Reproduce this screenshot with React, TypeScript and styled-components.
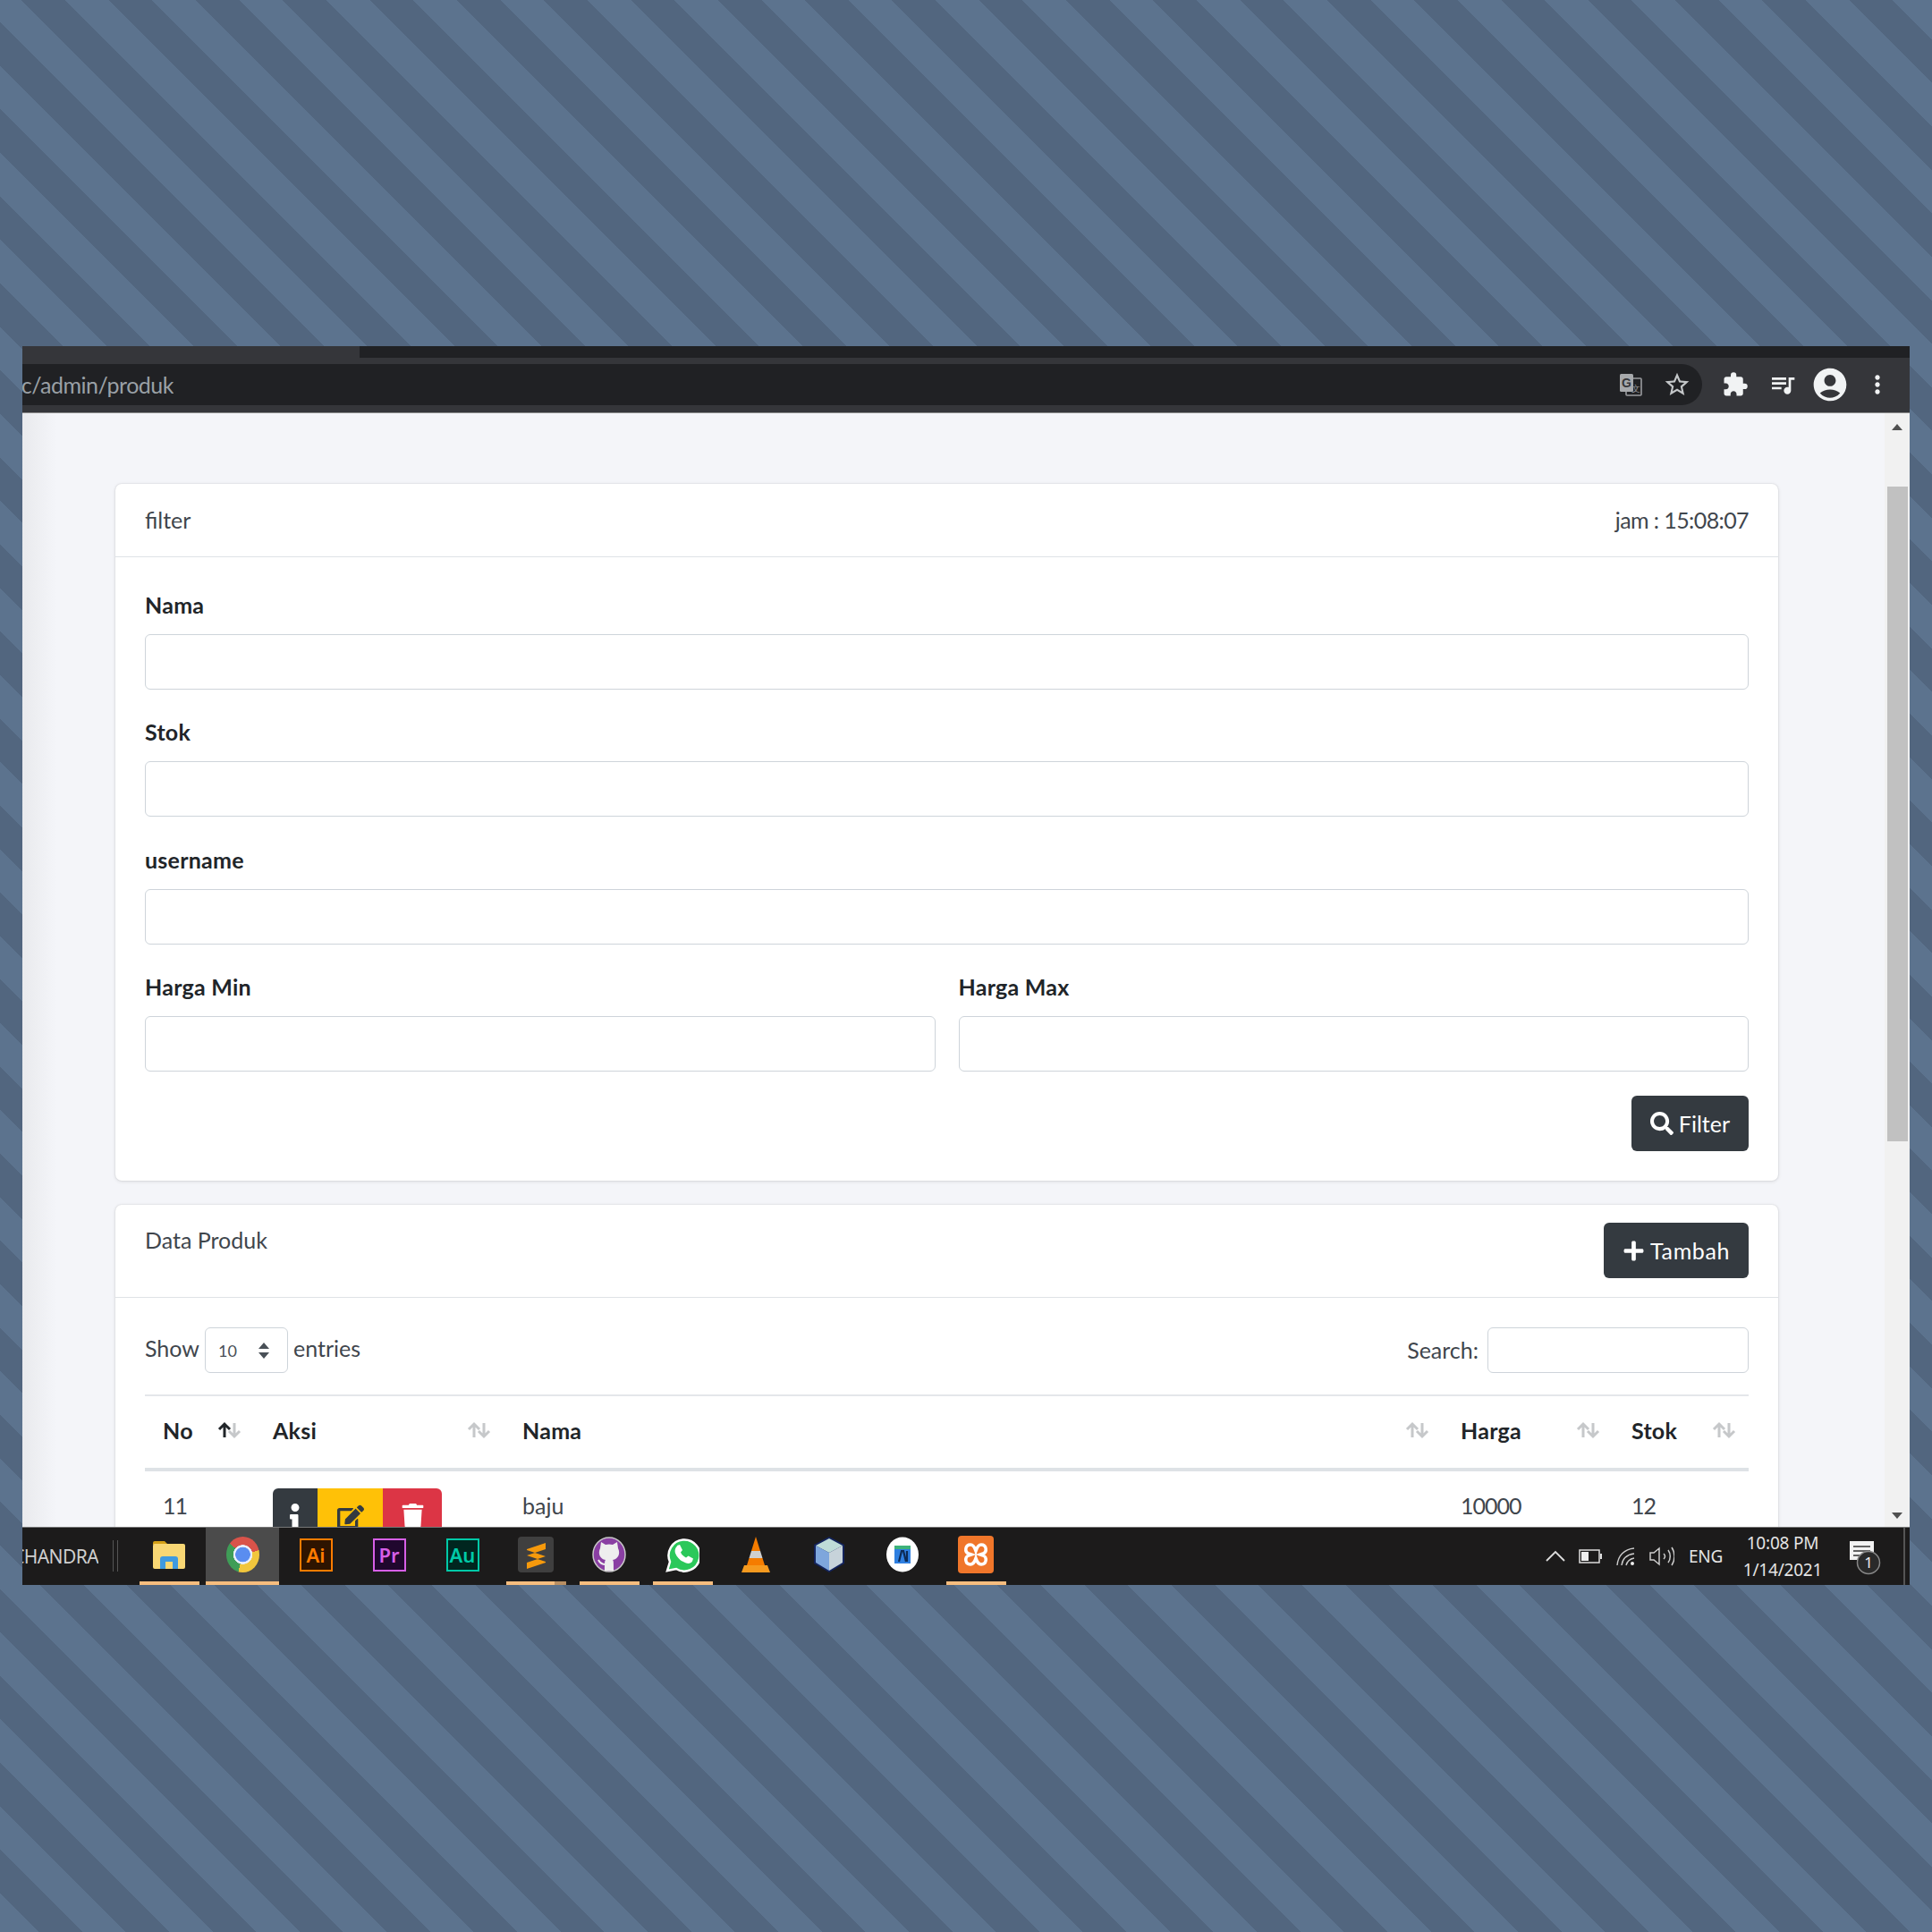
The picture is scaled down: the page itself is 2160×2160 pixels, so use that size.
import styled, { createGlobalStyle } from "styled-components";
import { FaSearch, FaPlus, FaInfo, FaEdit, FaTrash } from "react-icons/fa";
import { MdStarBorder, MdExtension, MdQueueMusic, MdAccountCircle, MdMoreVert } from "react-icons/md";

const Global = createGlobalStyle`
  html, body { margin: 0; padding: 0; }
  * { box-sizing: border-box; }
  body { font-family: "Lato", "Liberation Sans", sans-serif; }
`;

const Page = styled.div`
  width: 2160px;
  height: 2160px;
  padding: 387px 25px 0;
  background: repeating-linear-gradient(
    45deg,
    #5c738e 0 30.7px,
    #52667f 30.7px 65.1px,
    #5c738e 65.1px 68.8px
  );
`;

const Window = styled.div`
  height: 1385px;
  display: flex;
  flex-direction: column;
  overflow: hidden;
`;

const TabStrip = styled.div`
  height: 13px;
  flex: none;
  background: #202124;
  display: flex;
`;

const ActiveTab = styled.div`
  width: 377px;
  background: #35363a;
`;

const Toolbar = styled.div`
  height: 62px;
  flex: none;
  padding-top: 7px;
  background: #35363a;
  border-bottom: 1px solid #8b8b8b;
  display: flex;
  align-items: flex-start;
`;

const Omnibox = styled.div`
  width: 1878px;
  height: 46px;
  background: #202124;
  border-radius: 0 23px 23px 0;
  display: flex;
  align-items: center;
  justify-content: space-between;
  padding-right: 12px;
`;

const UrlClip = styled.div`
  width: 169px;
  overflow: hidden;
  display: flex;
  justify-content: flex-end;
`;

const Url = styled.span`
  font-size: 25px;
  letter-spacing: -0.5px;
  color: #9aa0a6;
  white-space: nowrap;
`;

const OmniIcons = styled.div`
  display: flex;
  align-items: center;
  gap: 23px;
`;

const ToolIcons = styled.div`
  display: flex;
  align-items: center;
  height: 46px;
  padding-left: 6px;
  color: #f1f3f4;
`;

const ToolSlot = styled.div<{ $w: number }>`
  width: ${(p) => p.$w}px;
  display: flex;
  justify-content: center;
  align-items: center;
`;

const Viewport = styled.div`
  flex: 1;
  min-height: 0;
  display: flex;
`;

const Main = styled.main`
  flex: 1;
  min-width: 0;
  overflow: hidden;
  padding: 79px 119px 0 104px;
  background: linear-gradient(90deg, #e9eaed, #f4f5f9 38px);
`;

const Scrollbar = styled.div`
  width: 28px;
  background: #f1f1f1;
  display: flex;
  flex-direction: column;
  align-items: center;
  justify-content: space-between;
  padding: 12px 0 9px;
  position: relative;
`;

const ScrollThumb = styled.div`
  position: absolute;
  top: 82px;
  left: 3px;
  width: 23px;
  height: 732px;
  background: #c1c1c1;
`;

const ScrollArrow = styled.div<{ $down?: boolean }>`
  width: 0;
  height: 0;
  border-left: 6px solid transparent;
  border-right: 6px solid transparent;
  ${(p) => (p.$down ? "border-top: 7px solid #505050;" : "border-bottom: 7px solid #505050;")}
`;

const Card = styled.section`
  background: #fff;
  border-radius: 7px;
  box-shadow: 0 0 2px rgba(0, 0, 0, 0.14), 0 1px 4px rgba(0, 0, 0, 0.1);
  margin-bottom: 27px;
`;

const CardHeader = styled.header<{ $tall?: boolean }>`
  display: flex;
  justify-content: space-between;
  align-items: ${(p) => (p.$tall ? "flex-start" : "center")};
  height: ${(p) => (p.$tall ? 104 : 82)}px;
  padding: ${(p) => (p.$tall ? "20px" : "0")} 33px 0;
  border-bottom: 1px solid #dfe2e6;
  font-size: 25px;
  line-height: 39px;
  color: #3f464d;
`;

const Clock = styled.span`
  letter-spacing: -0.6px;
`;

const CardBody = styled.div<{ $first?: boolean }>`
  padding: ${(p) => (p.$first ? 34 : 33)}px 33px 33px;
`;

const Field = styled.div`
  margin-bottom: 28.3px;
`;

const Label = styled.label`
  display: block;
  font-size: 25px;
  font-weight: 700;
  letter-spacing: 0.25px;
  line-height: 38px;
  margin-bottom: 14px;
  color: #212529;
`;

const Input = styled.input`
  display: block;
  width: 100%;
  height: 62px;
  border: 1.5px solid #ced4da;
  border-radius: 6px;
  background: #fff;
`;

const TwoCols = styled.div`
  display: grid;
  grid-template-columns: 1fr 1fr;
  gap: 26px;
  margin-bottom: -1.2px;
`;

const Actions = styled.div`
  display: flex;
  justify-content: flex-end;
`;

const DarkButton = styled.button`
  height: 62px;
  padding: 0 21px;
  display: inline-flex;
  align-items: center;
  gap: 6px;
  border: 0;
  border-radius: 6px;
  background: #343a40;
  color: #fff;
  font: 25px "Lato", sans-serif;
`;

const WideLabel = styled.span`
  letter-spacing: 0.6px;
`;

const TableTools = styled.div`
  display: flex;
  justify-content: space-between;
  align-items: center;
  height: 51px;
  margin-bottom: 24px;
  font-size: 25px;
  color: #3f464d;
`;

const ToolGroup = styled.div`
  display: flex;
  align-items: center;
  gap: 6px;
`;

const ToolText = styled.span<{ $lift: number }>`
  margin-bottom: ${(p) => p.$lift}px;
`;

const EntriesSelect = styled.div`
  width: 93px;
  height: 51px;
  border: 1.5px solid #ced4da;
  border-radius: 6px;
  display: flex;
  align-items: center;
  justify-content: space-between;
  padding: 0 19px 0 14px;
  font-size: 18px;
  color: #495057;
`;

const SearchInput = styled.input`
  width: 292px;
  height: 51px;
  border: 1.5px solid #ced4da;
  border-radius: 6px;
  margin-left: 4px;
`;

const Table = styled.table`
  width: 100%;
  table-layout: fixed;
  border-collapse: collapse;
  font-size: 25px;
  color: #3f464d;
`;

const Th = styled.th<{ $w: number }>`
  width: ${(p) => p.$w}px;
  height: 83px;
  padding: 0 14px 4px 21px;
  border-top: 2px solid #e4e7ea;
  border-bottom: 4px solid #dee2e6;
  text-align: left;
  letter-spacing: 0.25px;
  color: #212529;

  &:first-child {
    padding-left: 20px;
  }
`;

const ThInner = styled.div`
  display: flex;
  justify-content: space-between;
  align-items: center;
`;

const Td = styled.td<{ $num?: boolean }>`
  padding: 19px 21px;
  vertical-align: top;
  line-height: 39px;
  letter-spacing: ${(p) => (p.$num ? "-1px" : "0")};

  &:first-child {
    padding-left: 20px;
  }
`;

const BtnGroup = styled.div`
  display: inline-flex;
  height: 62px;
  border-radius: 6px;
  overflow: hidden;
`;

const GroupBtn = styled.div<{ $w: number; $bg: string; $fg: string }>`
  width: ${(p) => p.$w}px;
  background: ${(p) => p.$bg};
  color: ${(p) => p.$fg};
  display: flex;
  align-items: flex-start;
  justify-content: center;
  padding-top: 17px;
`;

const Taskbar = styled.footer`
  height: 65px;
  flex: none;
  background: #1c1b1b;
  border-top: 1px solid #777;
  display: flex;
  align-items: stretch;
  color: #e4e4e4;
`;

const UserClip = styled.div`
  width: 85px;
  overflow: hidden;
  display: flex;
  justify-content: flex-end;
  align-items: center;
  font: 21px "Noto Sans", sans-serif;
  letter-spacing: -0.6px;
  color: #cfcfcf;
`;

const Gripper = styled.div`
  width: 6px;
  height: 35px;
  margin: 14px 16px 0 16px;
  border-left: 1px solid #555;
  border-right: 1px solid #555;
`;

const Slots = styled.div`
  display: flex;
  flex: 1;
`;

const Slot = styled.div<{ $active?: boolean }>`
  width: 82px;
  display: flex;
  flex-direction: column;
  align-items: center;
  background: ${(p) => (p.$active ? "#4b4b4b" : "transparent")};
`;

const SlotIcon = styled.div`
  flex: 1;
  display: flex;
  align-items: center;
  justify-content: center;
`;

const RunLine = styled.div<{ $state?: "on" | "full" | "stack" }>`
  height: 4px;
  flex: none;
  width: ${(p) => (p.$state === "full" ? "100%" : "67px")};
  background: ${(p) =>
    p.$state === "stack"
      ? "linear-gradient(90deg, #f6bd7e 0 80%, #b98f63 80%)"
      : p.$state
      ? "#f6bd7e"
      : "transparent"};
`;

const AppBadge = styled.div<{ $c: string; $bg: string }>`
  width: 37px;
  height: 37px;
  border: 2px solid ${(p) => p.$c};
  background: ${(p) => p.$bg};
  color: ${(p) => p.$c};
  display: flex;
  align-items: center;
  justify-content: center;
  font: 600 22px "Noto Sans", sans-serif;
`;

const ChromeLogo = styled.div`
  width: 37px;
  height: 40px;
  border-radius: 50%;
  background: radial-gradient(circle, #5a8df0 0 8px, #e8eefc 8.6px 10.5px, transparent 11px),
    conic-gradient(from 310deg, #d9534a 0 125deg, #f1c63c 125deg 245deg, #3f9d57 245deg 360deg);
`;

const Tray = styled.div`
  display: flex;
  align-items: center;
  font: 19px "Noto Sans", sans-serif;
`;

const TrayItem = styled.div<{ $w: number }>`
  width: ${(p) => p.$w}px;
  display: flex;
  flex-direction: column;
  align-items: center;
  justify-content: center;
  line-height: 30px;
  letter-spacing: -0.2px;
`;

const ShowDesktop = styled.div`
  width: 2px;
  height: 100%;
  margin: 0 5px 0 14px;
  background: #555;
`;

function TranslateIcon() {
  return (
    <svg width="26" height="26" viewBox="0 0 26 26">
      <rect x="8" y="6" width="17" height="19" rx="1" fill="none" stroke="#9a9c9f" strokeWidth="1.6" />
      <rect x="1" y="1" width="15" height="20" rx="1.5" fill="#a7a9ac" />
      <text x="8.5" y="16" fontSize="14" fontWeight="700" textAnchor="middle" fill="#35363a" fontFamily="Liberation Sans">G</text>
      <text x="19" y="21" fontSize="10" textAnchor="middle" fill="#9a9c9f" fontFamily="Liberation Sans">文</text>
    </svg>
  );
}

function SortArrows({ active }: { active?: boolean }) {
  const up = active ? "#212529" : "#c6c8ca";
  return (
    <svg width="28" height="20" viewBox="0 0 28 20" fill="none" strokeWidth="3">
      <path d="M9 18V3M3 9l6-6 6 6" stroke={up} />
      <path d="M20 2v15M14 11l6 6 6-6" stroke="#c6c8ca" />
    </svg>
  );
}

function SelectCaret() {
  return (
    <svg width="14" height="18" viewBox="0 0 14 18" fill="#495057">
      <path d="M7 0l6 7H1zM7 18l-6-7h12z" />
    </svg>
  );
}

function ExplorerIcon() {
  return (
    <svg width="38" height="36" viewBox="0 0 38 36">
      <path d="M1 5a2 2 0 012-2h11l4 4h-17z" fill="#d4a017" />
      <rect x="1" y="6" width="36" height="28" rx="2" fill="#f8d774" />
      <path d="M9 34V23a3 3 0 013-3h14a3 3 0 013 3v11h-6v-8h-8v8z" fill="#3f9ae0" />
    </svg>
  );
}

function SublimeIcon() {
  return (
    <svg width="40" height="40" viewBox="0 0 40 40">
      <rect width="40" height="40" rx="4" fill="#3f3f3f" />
      <path d="M31 7L10 14v7l21-7zM10 15l21 7v6l-21-7zM31 22L10 29v7l21-7z" fill="#f79a0c" />
    </svg>
  );
}

function GithubIcon() {
  return (
    <svg width="38" height="40" viewBox="0 0 38 40">
      <ellipse cx="19" cy="20" rx="18" ry="19" fill="#8a3fa3" stroke="#c9c9c9" strokeWidth="1.5" />
      <path
        d="M10 6l5 3a14 14 0 018 0l5-3 1 7c3 6 0 12-6 13 1 1 1 3 1 12h-10c0-9 0-11 1-12-6-1-9-7-6-13z"
        fill="#eeeeee"
      />
      <path d="M7 26c2 4 4 5 8 5" fill="none" stroke="#eeeeee" strokeWidth="2" />
    </svg>
  );
}

function WhatsappIcon() {
  return (
    <svg width="38" height="40" viewBox="0 0 38 40">
      <path d="M2 38l3-10A17.5 17.5 0 1112 36z" fill="#2bc85a" stroke="#fff" strokeWidth="2.5" />
      <path
        d="M13 10l3-1 3 6-2 2.500c1 2.500 3 4.500 6 6l2.500-2 5.500 3-1 3c-1 2-4 3-7 2-6-2-10-6-12-11-1-3 0-6 2-8z"
        fill="#fff"
      />
    </svg>
  );
}

function VlcIcon() {
  return (
    <svg width="34" height="42" viewBox="0 0 34 42">
      <path d="M17 1l5 16H12z" fill="#f57c00" />
      <path d="M12 17h10l2.500 8h-15z" fill="#cfcfcf" />
      <path d="M9.500 25h15L27 33H7z" fill="#f57c00" />
      <path d="M4 33h26l3 8H1z" fill="#f59a1f" />
    </svg>
  );
}

function CubeIcon() {
  return (
    <svg width="36" height="42" viewBox="0 0 36 42">
      <path d="M18 1L35 10v21L18 41 1 31V10z" fill="#13235c" />
      <path d="M18 3l15 8-15 8-15-8z" fill="#bfdcd8" />
      <path d="M3 11l15 8v20L3 30z" fill="#7ea6dc" />
      <path d="M33 11l-15 8v20l15-9z" fill="#c7d3da" />
    </svg>
  );
}

function StudioIcon() {
  return (
    <svg width="38" height="40" viewBox="0 0 38 40">
      <ellipse cx="19" cy="20" rx="18" ry="19.500" fill="#fff" />
      <path d="M10 10h18v4H10z" fill="#3db27a" />
      <path d="M10 14h18v16H10z" fill="#2f7fe0" />
      <path d="M15 28l3-12h2l3 12M24 16v12" fill="none" stroke="#0d2b55" strokeWidth="2.200" />
    </svg>
  );
}

function XamppIcon() {
  return (
    <svg width="40" height="42" viewBox="0 0 40 42">
      <rect width="40" height="42" rx="4" fill="#f0762a" />
      <path
        d="M14 10c-6 0-7 8-2 10l3 1-3 1c-5 2-4 10 2 10 4 0 5-4 6-7 1 3 2 7 6 7 6 0 7-8 2-10l-3-1 3-1c5-2 4-10-2-10-4 0-5 4-6 7-1-3-2-7-6-7z"
        fill="none"
        stroke="#fff"
        strokeWidth="3.500"
      />
    </svg>
  );
}

function TrayIcons() {
  return (
    <Tray>
      <TrayItem $w={38}>
        <svg width="24" height="14" viewBox="0 0 24 14" fill="none" stroke="#ddd" strokeWidth="1.800">
          <path d="M2 12L12 2l10 10" />
        </svg>
      </TrayItem>
      <TrayItem $w={40}>
        <svg width="26" height="16" viewBox="0 0 26 16">
          <rect x="1" y="1" width="22" height="14" fill="none" stroke="#ddd" strokeWidth="1.500" />
          <rect x="3" y="3" width="8" height="10" fill="#eee" />
          <rect x="24" y="5" width="2" height="6" fill="#ddd" />
        </svg>
      </TrayItem>
      <TrayItem $w={40}>
        <svg width="22" height="22" viewBox="0 0 22 22" fill="none" stroke="#ccc" strokeWidth="1.400">
          <path d="M1 21C2 10 9 3 20 2M6 21c1-7 6-12 14-13M11 21c1-4 4-7 9-8" />
          <circle cx="18" cy="19" r="2" fill="#eee" stroke="none" />
        </svg>
      </TrayItem>
      <TrayItem $w={40}>
        <svg width="28" height="22" viewBox="0 0 28 22" fill="none" stroke="#ccc" strokeWidth="1.500">
          <path d="M1 7h4l6-5v18l-6-5H1zM16 8c2 2 2 4 0 6M21 4c3 4 3 10 0 14M25 1c4 6 4 14 0 20" />
        </svg>
      </TrayItem>
      <TrayItem $w={58}>ENG</TrayItem>
      <TrayItem $w={114}>
        <span>10:08 PM</span>
        <span>1/14/2021</span>
      </TrayItem>
      <TrayItem $w={64}>
        <svg width="44" height="42" viewBox="0 0 44 42">
          <path d="M8 4h27v21H20l-4 5v-5H8z" fill="#f2f2f2" />
          <path d="M12 10h19M12 15h19M12 20h13" stroke="#333" strokeWidth="1.500" />
          <circle cx="29" cy="28" r="12.500" fill="#2a2a2a" stroke="#888" strokeWidth="1.500" />
          <text x="29" y="34" textAnchor="middle" fontSize="17" fill="#eee" fontFamily="Noto Sans">1</text>
        </svg>
      </TrayItem>
      <ShowDesktop />
    </Tray>
  );
}

const formFields = ["Nama", "Stok", "username"];

const columns = [
  { name: "No", w: 122, active: true },
  { name: "Aksi", w: 279 },
  { name: "Nama", w: 1049 },
  { name: "Harga", w: 191 },
  { name: "Stok", w: 152 },
];

export default function App() {
  return (
    <Page>
      <Global />
      <Window>
        <TabStrip>
          <ActiveTab />
        </TabStrip>
        <Toolbar>
          <Omnibox>
            <UrlClip>
              <Url>oc/admin/produk</Url>
            </UrlClip>
            <OmniIcons>
              <TranslateIcon />
              <MdStarBorder size={32} color="#c4c7c9" />
            </OmniIcons>
          </Omnibox>
          <ToolIcons>
            <ToolSlot $w={61}><MdExtension size={30} /></ToolSlot>
            <ToolSlot $w={46}><MdQueueMusic size={32} /></ToolSlot>
            <ToolSlot $w={60}><MdAccountCircle size={44} /></ToolSlot>
            <ToolSlot $w={46}><MdMoreVert size={32} /></ToolSlot>
          </ToolIcons>
        </Toolbar>

        <Viewport>
          <Main>
            <Card>
              <CardHeader>
                <span>filter</span>
                <Clock>jam : 15:08:07</Clock>
              </CardHeader>
              <CardBody $first>
                {formFields.map((f) => (
                  <Field key={f}>
                    <Label>{f}</Label>
                    <Input />
                  </Field>
                ))}
                <TwoCols>
                  <Field>
                    <Label>Harga Min</Label>
                    <Input />
                  </Field>
                  <Field>
                    <Label>Harga Max</Label>
                    <Input />
                  </Field>
                </TwoCols>
                <Actions>
                  <DarkButton>
                    <FaSearch size={26} />
                    Filter
                  </DarkButton>
                </Actions>
              </CardBody>
            </Card>

            <Card>
              <CardHeader $tall>
                <span>Data Produk</span>
                <DarkButton>
                  <FaPlus size={25} />
                  <WideLabel>Tambah</WideLabel>
                </DarkButton>
              </CardHeader>
              <CardBody>
                <TableTools>
                  <ToolGroup>
                    <ToolText $lift={6}>Show</ToolText>
                    <EntriesSelect>
                      10
                      <SelectCaret />
                    </EntriesSelect>
                    <ToolText $lift={6}>entries</ToolText>
                  </ToolGroup>
                  <ToolGroup>
                    <ToolText $lift={2}>Search:</ToolText>
                    <SearchInput />
                  </ToolGroup>
                </TableTools>
                <Table>
                  <thead>
                    <tr>
                      {columns.map((c) => (
                        <Th key={c.name} $w={c.w}>
                          <ThInner>
                            {c.name}
                            <SortArrows active={c.active} />
                          </ThInner>
                        </Th>
                      ))}
                    </tr>
                  </thead>
                  <tbody>
                    <tr>
                      <Td $num>11</Td>
                      <Td>
                        <BtnGroup>
                          <GroupBtn $w={50} $bg="#343a40" $fg="#fff"><FaInfo size={32} /></GroupBtn>
                          <GroupBtn $w={73} $bg="#ffc107" $fg="#343a40"><FaEdit size={30} /></GroupBtn>
                          <GroupBtn $w={66} $bg="#dc3545" $fg="#fff"><FaTrash size={27} /></GroupBtn>
                        </BtnGroup>
                      </Td>
                      <Td>baju</Td>
                      <Td $num>10000</Td>
                      <Td $num>12</Td>
                    </tr>
                  </tbody>
                </Table>
              </CardBody>
            </Card>
          </Main>
          <Scrollbar>
            <ScrollArrow />
            <ScrollThumb />
            <ScrollArrow $down />
          </Scrollbar>
        </Viewport>

        <Taskbar>
          <UserClip>CHANDRA</UserClip>
          <Gripper />
          <Slots>
            <Slot><SlotIcon><ExplorerIcon /></SlotIcon><RunLine $state="on" /></Slot>
            <Slot $active><SlotIcon><ChromeLogo /></SlotIcon><RunLine $state="full" /></Slot>
            <Slot><SlotIcon><AppBadge $c="#ff7c00" $bg="#2e1400">Ai</AppBadge></SlotIcon><RunLine /></Slot>
            <Slot><SlotIcon><AppBadge $c="#d65fe6" $bg="#20072e">Pr</AppBadge></SlotIcon><RunLine /></Slot>
            <Slot><SlotIcon><AppBadge $c="#00c9a7" $bg="#00261f">Au</AppBadge></SlotIcon><RunLine /></Slot>
            <Slot><SlotIcon><SublimeIcon /></SlotIcon><RunLine $state="stack" /></Slot>
            <Slot><SlotIcon><GithubIcon /></SlotIcon><RunLine $state="on" /></Slot>
            <Slot><SlotIcon><WhatsappIcon /></SlotIcon><RunLine $state="on" /></Slot>
            <Slot><SlotIcon><VlcIcon /></SlotIcon><RunLine /></Slot>
            <Slot><SlotIcon><CubeIcon /></SlotIcon><RunLine /></Slot>
            <Slot><SlotIcon><StudioIcon /></SlotIcon><RunLine /></Slot>
            <Slot><SlotIcon><XamppIcon /></SlotIcon><RunLine $state="on" /></Slot>
          </Slots>
          <TrayIcons />
        </Taskbar>
      </Window>
    </Page>
  );
}
